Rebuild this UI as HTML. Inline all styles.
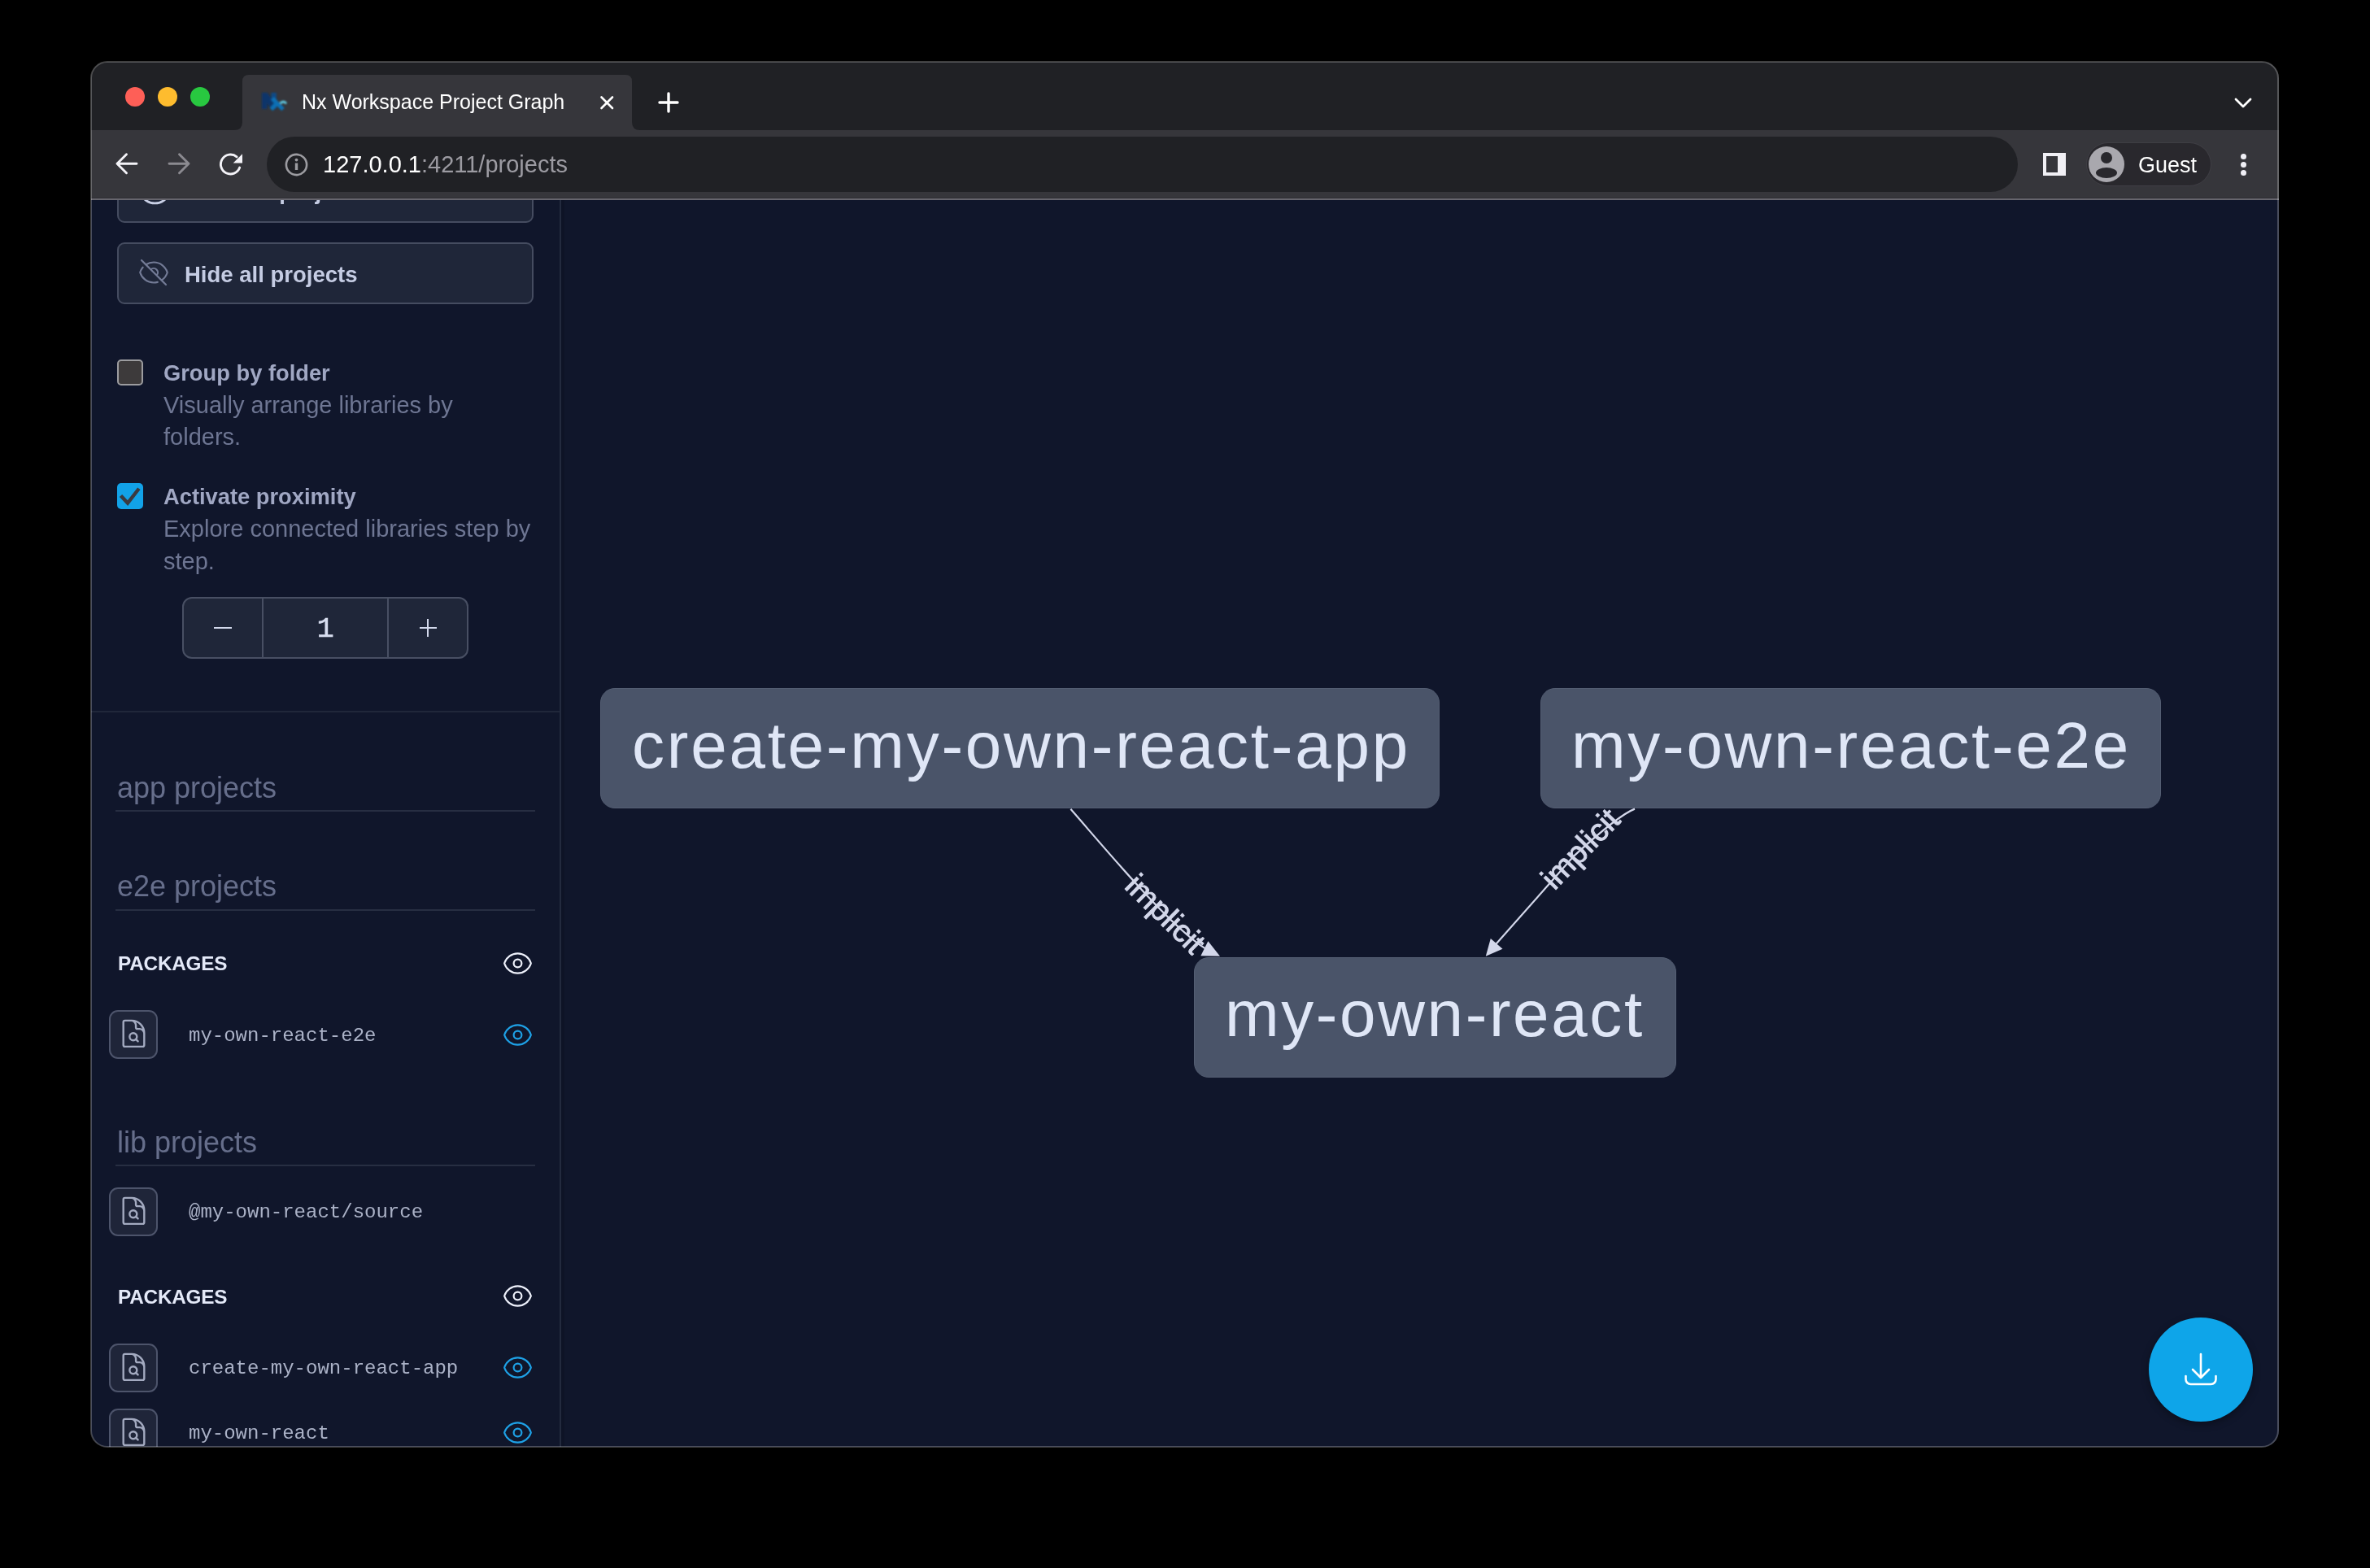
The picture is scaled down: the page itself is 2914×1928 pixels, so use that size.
<!DOCTYPE html>
<html><head><meta charset="utf-8">
<style>
html,body{margin:0;padding:0;background:#000;width:2914px;height:1928px;overflow:hidden;}
*{box-sizing:border-box;}
.a{position:absolute;}
.t{position:absolute;white-space:pre;line-height:1;font-family:"Liberation Sans",sans-serif;}
.m{position:absolute;white-space:pre;line-height:1;font-family:"Liberation Mono",monospace;}
#page{will-change:transform;position:absolute;left:0;top:0;width:2914px;height:1928px;clip-path:inset(76px 112px 149px 112px round 20px);background:#10162b;}
#winborder{will-change:transform;position:absolute;left:111px;top:75px;width:2691px;height:1705px;border-radius:21px;border:2px solid rgba(255,255,255,0.24);pointer-events:none;}
svg{position:absolute;overflow:visible;}
</style></head>
<body>
<div id="page">
  <!-- ===== TAB STRIP ===== -->
  <div class="a" style="left:0;top:0;width:2914px;height:160px;background:#202125;"></div>
  <div class="a" style="left:154px;top:107px;width:24px;height:24px;border-radius:50%;background:#fe5f57;"></div>
  <div class="a" style="left:194px;top:107px;width:24px;height:24px;border-radius:50%;background:#febc2e;"></div>
  <div class="a" style="left:234px;top:107px;width:24px;height:24px;border-radius:50%;background:#28c840;"></div>
  <!-- active tab -->
  <svg style="left:0;top:0" width="2914" height="170">
    <path d="M288 160 Q298 160 298 150 L298 100 Q298 92 306 92 L769 92 Q777 92 777 100 L777 150 Q777 160 787 160 Z" fill="#36363b"/>
  </svg>
  <div class="t" id="tabtitle" style="left:371px;top:112.6px;font-size:25px;color:#fff;">Nx Workspace Project Graph</div>
  <svg style="left:0;top:0" width="10" height="10">
    <!-- close X -->
    <path d="M739.5 119.5 L753 133 M753 119.5 L739.5 133" stroke="#fff" stroke-width="2.6" stroke-linecap="round"/>
    <!-- plus -->
    <path d="M822 115 L822 137 M811 126 L833 126" stroke="#fff" stroke-width="3.4" stroke-linecap="round"/>
    <!-- chevron down -->
    <path d="M2749 122 L2758 131 L2767 122" stroke="#fff" stroke-width="2.8" fill="none" stroke-linecap="round" stroke-linejoin="round"/>
    <!-- favicon Nx -->
    <defs><filter id="fb" x="-50%" y="-50%" width="200%" height="200%"><feGaussianBlur stdDeviation="0.8"/></filter></defs><g filter="url(#fb)">
    <path d="M322 114 L328.5 114 L340 129 L340 134 L334 134 L322 119 Z" fill="#08356a"/>
    <rect x="322" y="114" width="6.5" height="20" fill="#08356a"/>
    <rect x="333.5" y="114" width="6.3" height="10" fill="#0a4a86"/>
    <path d="M335 121 L348 134.5 M333.5 134.5 L341 126.5" stroke="#0b70b5" stroke-width="5" fill="none"/>
    <path d="M344.5 127 Q349 123 352 127.5" stroke="#62d2ec" stroke-width="2.6" fill="none"/></g>
  </svg>

  <!-- ===== TOOLBAR ===== -->
  <div class="a" style="left:0;top:160px;width:2914px;height:84px;background:#36363b;"></div>
  <div class="a" style="left:0;top:243px;width:2914px;height:1px;background:#2e2d33;"></div><div class="a" style="left:0;top:244px;width:2914px;height:2px;background:#66656d;"></div>
  <svg style="left:0;top:0" width="10" height="10">
    <!-- back -->
    <path d="M168 201.3 L144 201.3 M155.5 189.8 L144 201.3 L155.5 212.8" stroke="#f4f3f8" stroke-width="2.9" fill="none" stroke-linecap="round" stroke-linejoin="round"/>
    <!-- forward -->
    <path d="M208 201.3 L232 201.3 M220.5 189.8 L232 201.3 L220.5 212.8" stroke="#8b8a90" stroke-width="2.9" fill="none" stroke-linecap="round" stroke-linejoin="round"/>
    <!-- reload -->
    <path d="M294.7 206.1 A12 12 0 1 1 291.1 192.8" stroke="#f4f3f8" stroke-width="2.9" fill="none" stroke-linecap="round"/>
    <path d="M298 189.2 L298 200.5 L286.7 200.5 Z" fill="#f4f3f8"/>
  </svg>
  <!-- omnibox -->
  <div class="a" style="left:328px;top:168px;width:2153px;height:68px;border-radius:34px;background:#202125;"></div>
  <svg style="left:0;top:0" width="10" height="10">
    <circle cx="364.5" cy="202.5" r="12.6" stroke="#9c9ca1" stroke-width="2.6" fill="none"/>
    <rect x="362.8" y="200.5" width="3.4" height="8.5" fill="#9c9ca1"/>
    <circle cx="364.5" cy="196.6" r="1.9" fill="#9c9ca1"/>
  </svg>
  <div class="t" style="left:397px;top:187.5px;font-size:29px;color:#fff;">127.0.0.1<span style="color:#9c9ba2">:4211/projects</span></div>
  <!-- side panel icon -->
  <div class="a" style="left:2512px;top:188px;width:28px;height:28px;background:#f1f0f5;"></div>
  <div class="a" style="left:2516px;top:192px;width:14px;height:20px;background:#36363b;"></div>
  <!-- guest pill -->
  <div class="a" style="left:2566px;top:176px;width:152px;height:52px;border-radius:26px;background:#29282d;box-shadow:0 0 0 1px #3f3e44;"></div>
  <div class="a" style="left:2568px;top:180px;width:44px;height:44px;border-radius:50%;background:#a9a8ae;overflow:hidden;">
    <div class="a" style="left:15px;top:7px;width:14px;height:14px;border-radius:50%;background:#29282d;"></div>
    <div class="a" style="left:9px;top:26px;width:26px;height:13px;border-radius:50%;background:#29282d;"></div>
  </div>
  <div class="t" style="left:2629px;top:190px;font-size:27px;color:#fff;">Guest</div>
  <div class="a" style="left:2754.5px;top:188.5px;width:7px;height:7px;border-radius:50%;background:#f0eff5;"></div>
  <div class="a" style="left:2754.5px;top:198.5px;width:7px;height:7px;border-radius:50%;background:#f0eff5;"></div>
  <div class="a" style="left:2754.5px;top:208.5px;width:7px;height:7px;border-radius:50%;background:#f0eff5;"></div>

  <!-- ===== CONTENT ===== -->
  <div id="content" class="a" style="left:0;top:0;width:2914px;height:1928px;clip-path:inset(246px 0 0 0);">
  <!-- ===== SIDEBAR ===== -->
  <div class="a" style="left:688px;top:245px;width:2px;height:1540px;background:#232a3e;"></div><div class="a" style="left:690px;top:245px;width:4px;height:1540px;background:#0e1326;"></div>
  <!-- show all button (mostly scrolled off) -->
  <div class="a" style="left:144px;top:198px;width:512px;height:76px;border-radius:9px;background:#1f2639;border:2px solid #454c60;"></div>
  <svg style="left:168.5px;top:214.6px" width="43" height="43" viewBox="0 0 24 24" fill="none" stroke="#c9d0e6" stroke-width="1.5">
    <path d="M2.036 12.322a1.012 1.012 0 010-.639C3.423 7.51 7.36 4.5 12 4.5c4.638 0 8.573 3.007 9.963 7.178.07.207.07.431 0 .639C20.577 16.49 16.64 19.5 12 19.5c-4.638 0-8.573-3.007-9.963-7.178z"/>
  </svg>
  <div class="t" style="left:224px;top:222.2px;font-size:27.5px;font-weight:700;color:#c5cce3;">Show all projects</div>
  <!-- hide all button -->
  <div class="a" style="left:144px;top:298px;width:512px;height:76px;border-radius:9px;background:#1f2639;border:2px solid #454c60;"></div>
  <svg style="left:169px;top:315px" width="40" height="40" viewBox="0 0 24 24" fill="none" stroke="#737b96" stroke-width="1.3" stroke-linecap="round" stroke-linejoin="round">
    <path d="M3.98 8.223A10.477 10.477 0 001.934 12C3.226 16.338 7.244 19.5 12 19.5c.993 0 1.953-.138 2.863-.395M6.228 6.228A10.45 10.45 0 0112 4.5c4.756 0 8.773 3.162 10.065 7.498a10.523 10.523 0 01-4.293 5.774M6.228 6.228L3 3m3.228 3.228l3.65 3.65m7.894 7.894L21 21m-3.228-3.228l-3.65-3.65m0 0a3 3 0 10-4.243-4.243m4.242 4.242L9.88 9.88"/>
  </svg>
  <div class="t" style="left:227px;top:323.7px;font-size:27.5px;font-weight:700;color:#c5cce3;">Hide all projects</div>

  <!-- group by folder -->
  <div class="a" style="left:144px;top:442px;width:32px;height:32px;border-radius:5px;background:#3d3a3b;border:2px solid #9c9c9f;"></div>
  <div class="t" style="left:201px;top:445.4px;font-size:27.3px;font-weight:700;color:#a0a7c3;">Group by folder</div>
  <div class="t" style="left:201px;top:483.5px;font-size:29px;color:#6e7693;">Visually arrange libraries by</div>
  <div class="t" style="left:201px;top:523px;font-size:29px;color:#6e7693;">folders.</div>

  <!-- activate proximity -->
  <div class="a" style="left:144px;top:594px;width:32px;height:32px;border-radius:5px;background:#12a2e8;"></div>
  <svg style="left:0;top:0" width="10" height="10">
    <path d="M150 611 L157 618.5 L169.5 602.5" stroke="#3b3a40" stroke-width="4.4" fill="none" stroke-linecap="square"/>
  </svg>
  <div class="t" style="left:201px;top:596.7px;font-size:27.3px;font-weight:700;color:#a0a7c3;">Activate proximity</div>
  <div class="t" style="left:201px;top:636px;font-size:29px;color:#6e7693;">Explore connected libraries step by</div>
  <div class="t" style="left:201px;top:675.5px;font-size:29px;color:#6e7693;">step.</div>

  <!-- stepper -->
  <div class="a" style="left:224px;top:734px;width:352px;height:76px;border-radius:12px;background:#1f2639;border:2px solid #484f63;"></div>
  <div class="a" style="left:322px;top:735px;width:2px;height:74px;background:#484f63;"></div>
  <div class="a" style="left:476px;top:735px;width:2px;height:74px;background:#484f63;"></div>
  <div class="a" style="left:263px;top:770.5px;width:22px;height:2.4px;background:#d3d9ec;"></div>
  <div class="a" style="left:515.5px;top:770.5px;width:21.5px;height:2.4px;background:#d3d9ec;"></div>
  <div class="a" style="left:525.1px;top:761px;width:2.4px;height:21.5px;background:#d3d9ec;"></div>
  <div class="m" style="left:389.5px;top:756px;font-size:35.5px;color:#d8def0;-webkit-text-stroke:0.4px #d8def0;">1</div>

  <!-- divider -->
  <div class="a" style="left:112px;top:874px;width:576px;height:2px;background:#20273a;"></div>

  <!-- app projects -->
  <div class="t" style="left:144px;top:950.5px;font-size:36px;color:#666e8b;">app projects</div>
  <div class="a" style="left:142px;top:996px;width:516px;height:2px;background:#272e42;"></div>
  <!-- e2e projects -->
  <div class="t" style="left:144px;top:1072.3px;font-size:36px;color:#666e8b;">e2e projects</div>
  <div class="a" style="left:142px;top:1118px;width:516px;height:2px;background:#272e42;"></div>

  <!-- PACKAGES 1 -->
  <div class="t" style="left:145px;top:1173.1px;font-size:24.3px;font-weight:700;color:#e4e9f8;letter-spacing:-0.2px;">PACKAGES</div>
  <svg style="left:616.5px;top:1164.5px" width="39" height="39" viewBox="0 0 24 24" fill="none" stroke="#eef1fb" stroke-width="1.35">
    <path d="M2.036 12.322a1.012 1.012 0 010-.639C3.423 7.51 7.36 4.5 12 4.5c4.638 0 8.573 3.007 9.963 7.178.07.207.07.431 0 .639C20.577 16.49 16.64 19.5 12 19.5c-4.638 0-8.573-3.007-9.963-7.178z"/>
    <path d="M15 12a3 3 0 11-6 0 3 3 0 016 0z"/>
  </svg>

  <!-- item: my-own-react-e2e -->
  <div class="a" style="left:134px;top:1242px;width:60px;height:60px;border-radius:11px;background:#1f2539;border:2px solid #4d546b;"></div>
  <svg style="left:143.5px;top:1251.0px" width="41" height="41" viewBox="0 0 24 24" fill="none" stroke="#a3aac0" stroke-width="1.4" stroke-linecap="round" stroke-linejoin="round">
    <path d="M19.5 14.25v-2.625a3.375 3.375 0 00-3.375-3.375h-1.5A1.125 1.125 0 0113.5 7.125v-1.5a3.375 3.375 0 00-3.375-3.375H8.25m5.231 13.481L15 17.25m-4.5-15H5.625c-.621 0-1.125.504-1.125 1.125v16.5c0 .621.504 1.125 1.125 1.125h12.75c.621 0 1.125-.504 1.125-1.125V11.25a9 9 0 00-9-9zm3.75 11.625a2.625 2.625 0 11-5.25 0 2.625 2.625 0 015.25 0z"/>
  </svg>
  <div class="m" style="left:232px;top:1261.6px;font-size:24px;color:#abb2c7;">my-own-react-e2e</div>
  <svg style="left:616.5px;top:1252.5px" width="39" height="39" viewBox="0 0 24 24" fill="none" stroke="#1ea1e6" stroke-width="1.35">
    <path d="M2.036 12.322a1.012 1.012 0 010-.639C3.423 7.51 7.36 4.5 12 4.5c4.638 0 8.573 3.007 9.963 7.178.07.207.07.431 0 .639C20.577 16.49 16.64 19.5 12 19.5c-4.638 0-8.573-3.007-9.963-7.178z"/>
    <path d="M15 12a3 3 0 11-6 0 3 3 0 016 0z"/>
  </svg>

  <!-- lib projects -->
  <div class="t" style="left:144px;top:1386.8px;font-size:36px;color:#666e8b;">lib projects</div>
  <div class="a" style="left:142px;top:1431.5px;width:516px;height:2px;background:#272e42;"></div>

  <!-- item: @my-own-react/source -->
  <div class="a" style="left:134px;top:1460px;width:60px;height:60px;border-radius:11px;background:#1f2539;border:2px solid #4d546b;"></div>
  <svg style="left:143.5px;top:1469.0px" width="41" height="41" viewBox="0 0 24 24" fill="none" stroke="#a3aac0" stroke-width="1.4" stroke-linecap="round" stroke-linejoin="round">
    <path d="M19.5 14.25v-2.625a3.375 3.375 0 00-3.375-3.375h-1.5A1.125 1.125 0 0113.5 7.125v-1.5a3.375 3.375 0 00-3.375-3.375H8.25m5.231 13.481L15 17.25m-4.5-15H5.625c-.621 0-1.125.504-1.125 1.125v16.5c0 .621.504 1.125 1.125 1.125h12.75c.621 0 1.125-.504 1.125-1.125V11.25a9 9 0 00-9-9zm3.75 11.625a2.625 2.625 0 11-5.25 0 2.625 2.625 0 015.25 0z"/>
  </svg>
  <div class="m" style="left:232px;top:1479.2px;font-size:24px;color:#abb2c7;">@my-own-react/source</div>

  <!-- PACKAGES 2 -->
  <div class="t" style="left:145px;top:1582.5px;font-size:24.3px;font-weight:700;color:#e4e9f8;letter-spacing:-0.2px;">PACKAGES</div>
  <svg style="left:616.5px;top:1573.5px" width="39" height="39" viewBox="0 0 24 24" fill="none" stroke="#eef1fb" stroke-width="1.35">
    <path d="M2.036 12.322a1.012 1.012 0 010-.639C3.423 7.51 7.36 4.5 12 4.5c4.638 0 8.573 3.007 9.963 7.178.07.207.07.431 0 .639C20.577 16.49 16.64 19.5 12 19.5c-4.638 0-8.573-3.007-9.963-7.178z"/>
    <path d="M15 12a3 3 0 11-6 0 3 3 0 016 0z"/>
  </svg>

  <!-- item: create-my-own-react-app -->
  <div class="a" style="left:134px;top:1652px;width:60px;height:60px;border-radius:11px;background:#1f2539;border:2px solid #4d546b;"></div>
  <svg style="left:143.5px;top:1661.0px" width="41" height="41" viewBox="0 0 24 24" fill="none" stroke="#a3aac0" stroke-width="1.4" stroke-linecap="round" stroke-linejoin="round">
    <path d="M19.5 14.25v-2.625a3.375 3.375 0 00-3.375-3.375h-1.5A1.125 1.125 0 0113.5 7.125v-1.5a3.375 3.375 0 00-3.375-3.375H8.25m5.231 13.481L15 17.25m-4.5-15H5.625c-.621 0-1.125.504-1.125 1.125v16.5c0 .621.504 1.125 1.125 1.125h12.75c.621 0 1.125-.504 1.125-1.125V11.25a9 9 0 00-9-9zm3.75 11.625a2.625 2.625 0 11-5.25 0 2.625 2.625 0 015.25 0z"/>
  </svg>
  <div class="m" style="left:232px;top:1671.2px;font-size:24px;color:#abb2c7;">create-my-own-react-app</div>
  <svg style="left:616.5px;top:1662.0px" width="39" height="39" viewBox="0 0 24 24" fill="none" stroke="#1ea1e6" stroke-width="1.35">
    <path d="M2.036 12.322a1.012 1.012 0 010-.639C3.423 7.51 7.36 4.5 12 4.5c4.638 0 8.573 3.007 9.963 7.178.07.207.07.431 0 .639C20.577 16.49 16.64 19.5 12 19.5c-4.638 0-8.573-3.007-9.963-7.178z"/>
    <path d="M15 12a3 3 0 11-6 0 3 3 0 016 0z"/>
  </svg>

  <!-- item: my-own-react -->
  <div class="a" style="left:134px;top:1732px;width:60px;height:60px;border-radius:11px;background:#1f2539;border:2px solid #4d546b;"></div>
  <svg style="left:143.5px;top:1741.0px" width="41" height="41" viewBox="0 0 24 24" fill="none" stroke="#a3aac0" stroke-width="1.4" stroke-linecap="round" stroke-linejoin="round">
    <path d="M19.5 14.25v-2.625a3.375 3.375 0 00-3.375-3.375h-1.5A1.125 1.125 0 0113.5 7.125v-1.5a3.375 3.375 0 00-3.375-3.375H8.25m5.231 13.481L15 17.25m-4.5-15H5.625c-.621 0-1.125.504-1.125 1.125v16.5c0 .621.504 1.125 1.125 1.125h12.75c.621 0 1.125-.504 1.125-1.125V11.25a9 9 0 00-9-9zm3.75 11.625a2.625 2.625 0 11-5.25 0 2.625 2.625 0 015.25 0z"/>
  </svg>
  <div class="m" style="left:232px;top:1751.2px;font-size:24px;color:#abb2c7;">my-own-react</div>
  <svg style="left:616.5px;top:1742.0px" width="39" height="39" viewBox="0 0 24 24" fill="none" stroke="#1ea1e6" stroke-width="1.35">
    <path d="M2.036 12.322a1.012 1.012 0 010-.639C3.423 7.51 7.36 4.5 12 4.5c4.638 0 8.573 3.007 9.963 7.178.07.207.07.431 0 .639C20.577 16.49 16.64 19.5 12 19.5c-4.638 0-8.573-3.007-9.963-7.178z"/>
    <path d="M15 12a3 3 0 11-6 0 3 3 0 016 0z"/>
  </svg>
  <!-- ===== GRAPH ===== -->
  <div class="a" style="left:738px;top:846px;width:1032px;height:147.5px;border-radius:18px;background:#4a5469;border:1.5px solid #545e73;"></div>
  <div class="t" style="left:777px;top:876.5px;font-size:80px;letter-spacing:2.75px;color:#dfe6f6;">create-my-own-react-app</div>
  <div class="a" style="left:1894px;top:846px;width:763px;height:148px;border-radius:18px;background:#4a5469;border:1.5px solid #545e73;"></div>
  <div class="t" style="left:1932px;top:877px;font-size:80px;letter-spacing:2.7px;color:#dfe6f6;">my-own-react-e2e</div>
  <div class="a" style="left:1468px;top:1176.5px;width:593px;height:148px;border-radius:18px;background:#4a5469;border:1.5px solid #545e73;"></div>
  <div class="t" style="left:1506px;top:1206.6px;font-size:80px;letter-spacing:2.6px;color:#dfe6f6;">my-own-react</div>

  <svg style="left:0;top:0" width="10" height="10">
    <path d="M1316.4 994.8 C1369 1055 1446.4 1149 1490 1171" stroke="#d3d7ea" stroke-width="2.2" fill="none"/>
    <path d="M1500 1175.8 L1485.4 1157.3 L1476.4 1175.2 Z" fill="#d3d7ea"/>
    <path d="M2010 994.6 C1997 999.5 1975 1016 1935.1 1052.6 L1833 1168" stroke="#d3d7ea" stroke-width="2.2" fill="none"/>
    <path d="M1826.8 1175.8 L1832.8 1154 L1847.5 1166.8 Z" fill="#d3d7ea"/>
  </svg>
  <div class="t" style="left:1373px;top:1103.5px;width:120px;text-align:center;font-size:39px;color:#d3d7ea;-webkit-text-stroke:0.9px #d3d7ea;transform:rotate(44.7deg);transform-origin:60px 19.5px;">implicit</div>
  <div class="t" style="left:1883px;top:1023.5px;width:120px;text-align:center;font-size:39px;color:#d3d7ea;-webkit-text-stroke:0.9px #d3d7ea;transform:rotate(-46deg);transform-origin:60px 19.5px;">implicit</div>

  <!-- download fab -->
  <div class="a" style="left:2642px;top:1620px;width:128px;height:128px;border-radius:50%;background:#0ea5e9;box-shadow:0 3px 10px rgba(0,0,0,0.35);"></div>
  <svg style="left:0;top:0" width="10" height="10">
    <path d="M2706 1665 L2706 1693 M2696 1684 L2706 1694 L2716 1684" stroke="#fff" stroke-width="2.6" fill="none" stroke-linecap="round" stroke-linejoin="round"/>
    <path d="M2687.5 1692 L2687.5 1696 A6 6 0 0 0 2693.5 1702 L2718.5 1702 A6 6 0 0 0 2724.5 1696 L2724.5 1692" stroke="#fff" stroke-width="2.6" fill="none" stroke-linecap="round"/>
  </svg>
  </div>
</div>
<div id="winborder"></div>
</body></html>
